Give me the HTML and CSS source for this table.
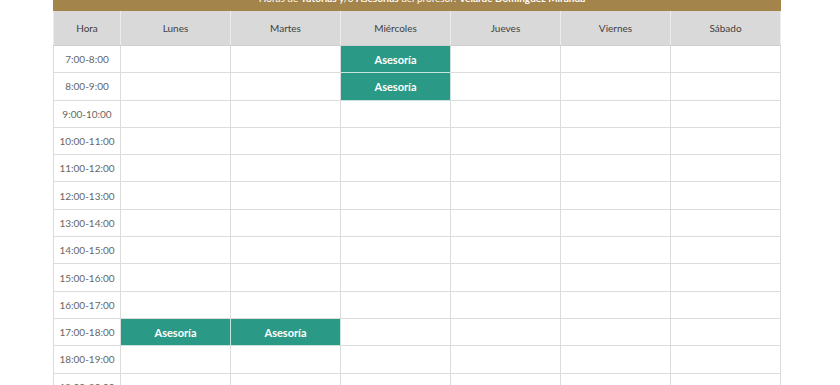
FILE: index.html
```html
<!DOCTYPE html>
<html lang="es">
<head>
<meta charset="utf-8">
<link rel="stylesheet" href="styles.css">
</head>
<body>
<div class="wrap">
  <div class="banner">Horas de <b>Tutorías</b> y/o <b>Asesorías</b> del profesor: <b>Velarde Domínguez Miranda</b></div>
  <table class="sched">
    <colgroup>
      <col class="c-hora"><col class="c-day"><col class="c-day"><col class="c-day"><col class="c-day"><col class="c-day"><col class="c-day">
    </colgroup>
    <thead>
      <tr><th>Hora</th><th>Lunes</th><th>Martes</th><th>Miércoles</th><th>Jueves</th><th>Viernes</th><th>Sábado</th></tr>
    </thead>
    <tbody>
      <tr><td class="t">7:00-8:00</td><td></td><td></td><td class="as">Asesoría</td><td></td><td></td><td></td></tr>
      <tr><td class="t">8:00-9:00</td><td></td><td></td><td class="as">Asesoría</td><td></td><td></td><td></td></tr>
      <tr><td class="t">9:00-10:00</td><td></td><td></td><td></td><td></td><td></td><td></td></tr>
      <tr><td class="t">10:00-11:00</td><td></td><td></td><td></td><td></td><td></td><td></td></tr>
      <tr><td class="t">11:00-12:00</td><td></td><td></td><td></td><td></td><td></td><td></td></tr>
      <tr><td class="t">12:00-13:00</td><td></td><td></td><td></td><td></td><td></td><td></td></tr>
      <tr><td class="t">13:00-14:00</td><td></td><td></td><td></td><td></td><td></td><td></td></tr>
      <tr><td class="t">14:00-15:00</td><td></td><td></td><td></td><td></td><td></td><td></td></tr>
      <tr><td class="t">15:00-16:00</td><td></td><td></td><td></td><td></td><td></td><td></td></tr>
      <tr><td class="t">16:00-17:00</td><td></td><td></td><td></td><td></td><td></td><td></td></tr>
      <tr><td class="t">17:00-18:00</td><td class="as">Asesoría</td><td class="as">Asesoría</td><td></td><td></td><td></td><td></td></tr>
      <tr><td class="t">18:00-19:00</td><td></td><td></td><td></td><td></td><td></td><td></td></tr>
      <tr><td class="t">19:00-20:00</td><td></td><td></td><td></td><td></td><td></td><td></td></tr>
    </tbody>
  </table>
</div>
</body>
</html>
```

FILE: styles.css
```css
html, body {
  margin: 0;
  padding: 0;
  background: #ffffff;
}
body {
  font-family: Lato, "Open Sans", sans-serif;
  overflow: hidden;
}
.wrap {
  width: 728px;
  margin-left: 53px;
  margin-top: -12px;
}
.banner {
  background: #a3844b;
  color: #ffffff;
  font-size: 10px;
  line-height: 20px;
  height: 23px;
  text-align: center;
  padding-left: 10px;
}
.sched {
  width: 728px;
  border-collapse: collapse;
  table-layout: fixed;
}
.c-hora { width: 67px; }
.c-day { width: 110px; }
.sched th {
  background: #d9d9d9;
  color: #3f3f3f;
  font-weight: 400;
  font-size: 10px;
  height: 34px;
  padding: 0;
  border-left: 1px solid #ececec;
  border-right: 1px solid #ececec;
  border-bottom: 1px solid #cfcfcf;
}
.sched td {
  height: 26.3px;
  padding: 0;
  border: 1px solid #dcdcdc;
  text-align: center;
  font-size: 10px;
}
.sched td.t {
  color: #666666;
}
.sched td.as {
  background: #2a9985;
  color: #ffffff;
  font-weight: 700;
  font-size: 11px;
  border-color: #c9e3dd;
}
```
